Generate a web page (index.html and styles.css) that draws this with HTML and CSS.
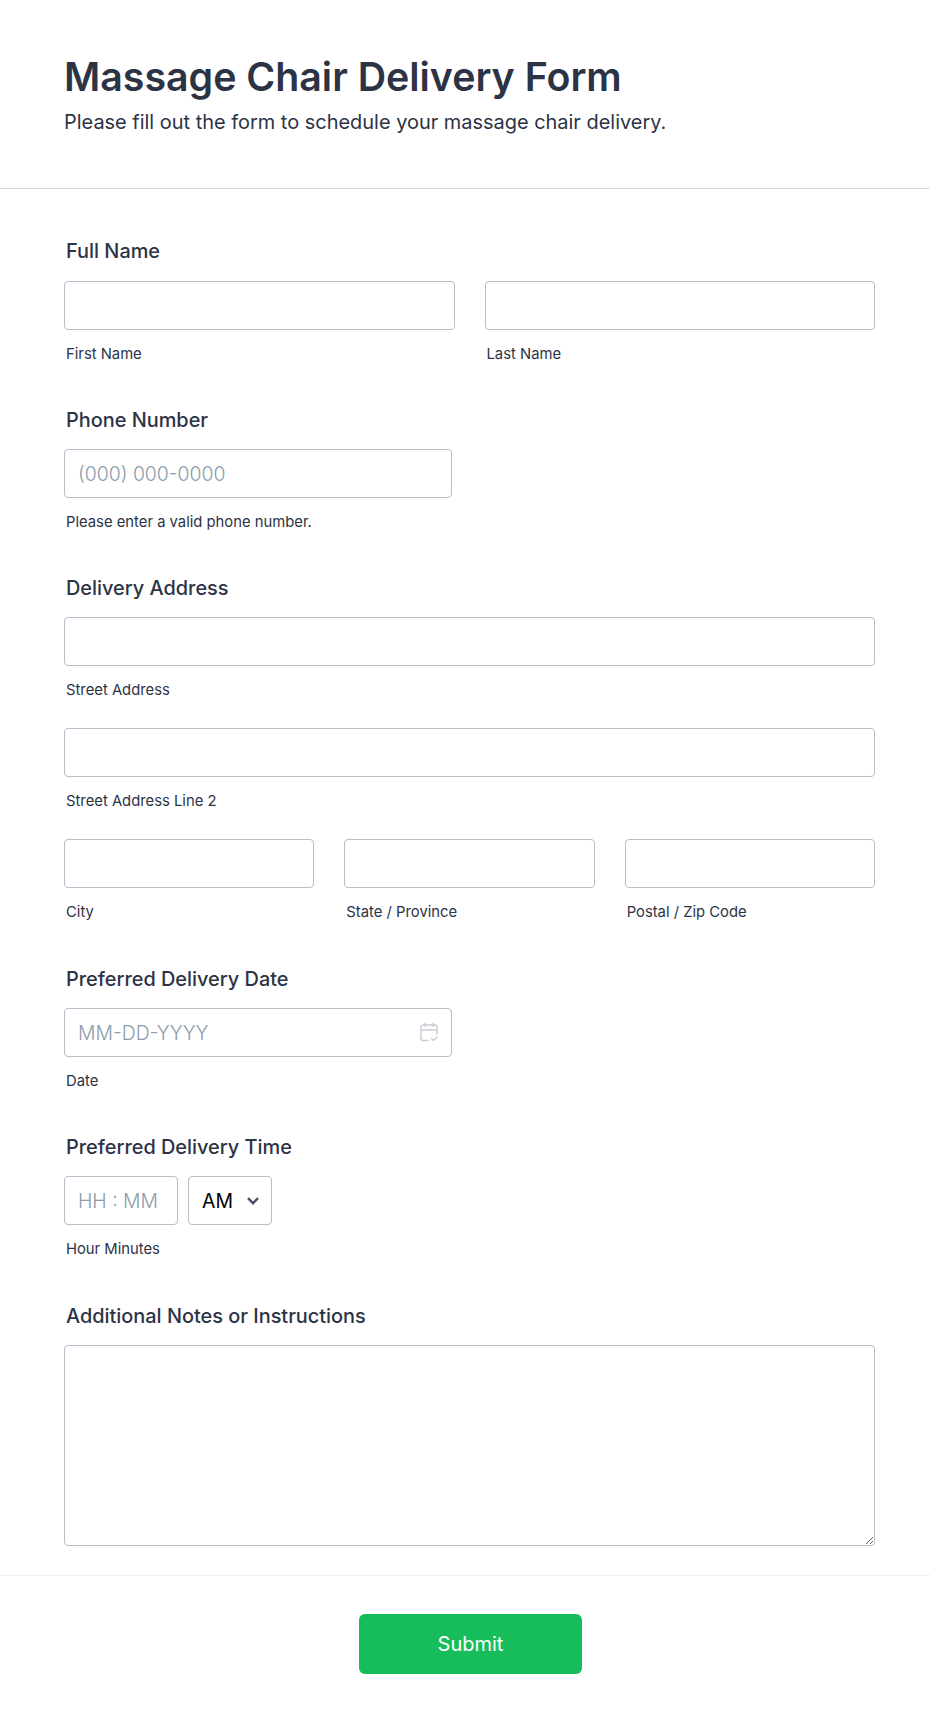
FILE: index.html
```html
<!DOCTYPE html>
<html lang="en">
<head>
<meta charset="utf-8">
<title>Massage Chair Delivery Form</title>
<link rel="stylesheet" href="styles.css">
</head>
<body>
<form class="form">
  <header class="form-header">
    <h1 class="form-title">Massage Chair Delivery Form</h1>
    <p class="form-desc">Please fill out the form to schedule your massage chair delivery.</p>
  </header>
  <div class="form-body">
    <section class="field">
      <div class="field-label">Full Name</div>
      <div class="row row-2">
        <label class="cell"><input class="input" type="text"><span class="sub">First Name</span></label>
        <label class="cell"><input class="input" type="text"><span class="sub">Last Name</span></label>
      </div>
    </section>
    <section class="field">
      <div class="field-label">Phone Number</div>
      <label class="cell cell-half"><input class="input" type="text" placeholder="(000) 000-0000"><span class="sub">Please enter a valid phone number.</span></label>
    </section>
    <section class="field">
      <div class="field-label">Delivery Address</div>
      <div class="stack">
        <label class="cell"><input class="input" type="text"><span class="sub">Street Address</span></label>
        <label class="cell"><input class="input" type="text"><span class="sub">Street Address Line 2</span></label>
        <div class="row row-3">
          <label class="cell"><input class="input" type="text"><span class="sub">City</span></label>
          <label class="cell"><input class="input" type="text"><span class="sub">State / Province</span></label>
          <label class="cell"><input class="input" type="text"><span class="sub">Postal / Zip Code</span></label>
        </div>
      </div>
    </section>
    <section class="field field-spaced">
      <div class="field-label">Preferred Delivery Date</div>
      <label class="cell cell-half">
        <span class="date-wrap">
          <input class="input" type="text" placeholder="MM-DD-YYYY">
          <svg class="cal-icon" width="20" height="20" viewBox="0 0 20 20" fill="none" stroke="#c9ccd6" stroke-width="1.4" stroke-linecap="round" stroke-linejoin="round" aria-hidden="true">
            <path d="M9 18.500H4a2 2 0 0 1-2-2V5a2 2 0 0 1 2-2h12a2 2 0 0 1 2 2v7"/>
            <path d="M2 8h16M6 1v3.500M14 1v3.500"/>
            <path d="M12.500 16.500l2 2 3.500-3.500"/>
          </svg>
        </span>
        <span class="sub">Date</span>
      </label>
    </section>
    <section class="field">
      <div class="field-label">Preferred Delivery Time</div>
      <div class="time-row">
        <input class="input input-time" type="text" placeholder="HH : MM">
        <span class="select-wrap">
          <select class="select"><option>AM</option><option>PM</option></select>
          <svg class="chev" width="12" height="8" viewBox="0 0 12 8" fill="none" stroke="#4a5468" stroke-width="2.400" aria-hidden="true"><path d="M1 1.200L6 6.200l5-5"/></svg>
        </span>
      </div>
      <span class="sub">Hour Minutes</span>
    </section>
    <section class="field field-spaced">
      <div class="field-label">Additional Notes or Instructions</div>
      <textarea class="textarea"></textarea>
    </section>
  </div>
  <footer class="form-footer">
    <button class="submit" type="button">Submit</button>
  </footer>
</form>
</body>
</html>
```
FILE: styles.css
```css
* { box-sizing: border-box; }
html, body { margin: 0; padding: 0; background: #fff; }
body { font-family: Inter, "Liberation Sans", sans-serif; color: #2c3345; }
.form { width: 930px; }
.form-header { padding: 52px 64px 48px; border-bottom: 1px solid #d8dae3; height: 189px; }
.form-title { margin: 0; font-size: 39.3px; line-height: 50px; font-weight: 560; }
.form-desc { margin: 6px 0 0; font-size: 19.95px; line-height: 28px; font-weight: 400; }
.form-body { padding: 48px 55px 0 64px; display: flex; flex-direction: column; gap: 41px; }
.field { display: flex; flex-direction: column; }
.field-spaced { margin-top: 1px; }
.field-label { margin: 0 0 15px 2px; font-size: 19.9px; line-height: 28px; font-weight: 500; }
.field:first-child .field-label { margin-bottom: 16px; }
.row { display: grid; gap: 30px; }
.row-2 { grid-template-columns: 1fr 1fr; }
.row-3 { grid-template-columns: 1fr 1fr 1fr; }
.stack { display: flex; flex-direction: column; gap: 27px; }
.cell { display: flex; flex-direction: column; min-width: 0; }
.cell-half { width: 388px; }
.input { display: block; width: 100%; height: 49px; padding: 0 13px; border: 1px solid #b8bdc9; border-radius: 4px; background: #fff; font: 300 19.4px Inter, "Liberation Sans", sans-serif; color: #2c3345; outline: none; }
.input::placeholder { color: #8c9bab; opacity: 1; }
.sub { display: block; margin: 14px 0 0 2px; font-size: 14.8px; line-height: 21px; font-weight: 400; }
.date-wrap { position: relative; display: block; }
.cal-icon { position: absolute; top: 14px; right: 13px; }
.time-row { display: flex; gap: 10px; }
.input-time { width: 114px; }
.select-wrap { position: relative; display: block; width: 84px; }
.select { display: block; width: 100%; height: 49px; padding: 0 13px; border: 1px solid #b8bdc9; border-radius: 4px; background: #fff; appearance: none; font: 400 19.4px Inter, "Liberation Sans", sans-serif; color: #000; outline: none; }
.chev { position: absolute; top: 21px; right: 13px; pointer-events: none; }
.textarea { display: block; width: 100%; height: 201px; border: 1px solid #b8bdc9; border-radius: 4px; background: #fff; outline: none; }
.form-footer { margin-top: 29px; padding: 38px 0 49px; border-top: 1px solid #eeeff5; display: flex; justify-content: center; }
.submit { width: 223px; height: 60px; margin-left: 11px; border: 0; border-radius: 6px; background: #18bd5b; color: #fff; font: 400 20px Inter, "Liberation Sans", sans-serif; }
```
